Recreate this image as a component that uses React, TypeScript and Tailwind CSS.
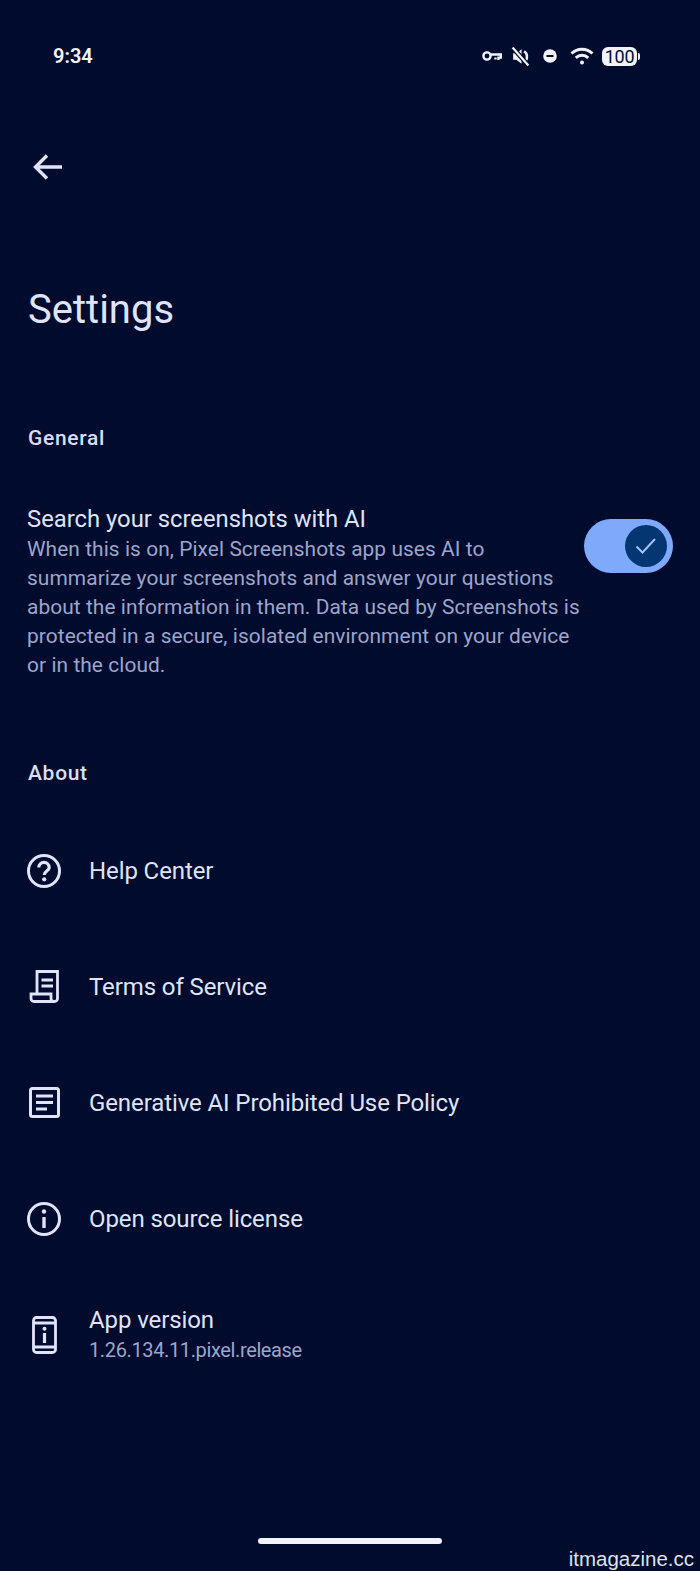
const font = { fontFamily: "Roboto, sans-serif" };

function StatusIcons() {
  return (
    <div className="flex items-center">
      <svg width="20" height="12" viewBox="0 0 20 12" className="mr-[9px]" fill="none" stroke="#f1f3fb" strokeWidth="2.4">
        <circle cx="5" cy="6" r="3.6" />
        <path d="M8.5 4.5H18.8V7.6H16.5V10M13.5 7.6V9.5" />
      </svg>
      <svg width="19" height="21" viewBox="0 0 18 20" className="mr-[13px]" fill="#f1f3fb">
        <path d="M2 7h3l5-4v14l-5-4H2z" />
        <path d="M12.5 5a6.5 6.5 0 0 1 1.5 9" fill="none" stroke="#f1f3fb" strokeWidth="2.4" />
        <path d="M1.5 1.5l15 17" stroke="#000b2e" strokeWidth="4.5" />
        <path d="M1.5 1.5l15 17" stroke="#f1f3fb" strokeWidth="2.2" />
      </svg>
      <svg width="14" height="14" viewBox="0 0 14 14" className="mr-[13px]">
        <circle cx="7" cy="7" r="6.8" fill="#f1f3fb" />
        <rect x="3.5" y="6" width="7" height="2" fill="#000b2e" />
      </svg>
      <svg width="24" height="18" viewBox="0 0 24 18" className="mr-[8px]" fill="none" stroke="#f1f3fb" strokeWidth="3">
        <path d="M1.5 6.5a15 15 0 0 1 21 0" />
        <path d="M5.8 10.8a9 9 0 0 1 12.4 0" />
        <circle cx="12" cy="15.5" r="2" fill="#f1f3fb" stroke="none" />
      </svg>
      <div className="flex items-center">
        <div className="w-[35px] h-[19px] rounded-[6px] bg-[#f1f3fb] text-[#000b2e] text-[18px] leading-[19px] text-center tracking-[-0.3px]" style={font}>
          100
        </div>
        <div className="ml-[1px] w-[2px] h-[7px] rounded-r-[2px] bg-[#f1f3fb]" />
      </div>
    </div>
  );
}

function HelpIcon() {
  return (
    <svg width="36" height="36" viewBox="0 0 36 36" fill="none" stroke="#dfe4fb" strokeWidth="3">
      <circle cx="17" cy="18" r="15.5" />
      <path d="M11.8 14.5a5.2 5.2 0 0 1 10.4 0c0 3.6-5 3.6-5 7.5" strokeWidth="3.2" />
      <circle cx="17.2" cy="26.3" r="2.1" fill="#dfe4fb" stroke="none" />
    </svg>
  );
}

function TermsIcon() {
  return (
    <svg width="36" height="36" viewBox="0 0 36 36" fill="none" stroke="#dfe4fb" strokeWidth="2.8">
      <path d="M10 25V2.5H30.5V29.5a3 3 0 0 1-3 3H7a3 3 0 0 1-3-3V25H24V29.5a3 3 0 0 0 3 3" />
      <path d="M14.5 11H26M14.5 17H26" />
    </svg>
  );
}

function PolicyIcon() {
  return (
    <svg width="36" height="36" viewBox="0 0 36 36" fill="none" stroke="#dfe4fb" strokeWidth="3">
      <rect x="3.5" y="3.5" width="28" height="28" rx="2" />
      <path d="M9 11H26M9 17.5H26M9 24H20" />
    </svg>
  );
}

function InfoIcon() {
  return (
    <svg width="36" height="36" viewBox="0 0 36 36" fill="none" stroke="#dfe4fb" strokeWidth="3">
      <circle cx="17" cy="18" r="15.5" />
      <path d="M17 16V27" strokeWidth="3.4" />
      <circle cx="17" cy="10.5" r="2.2" fill="#dfe4fb" stroke="none" />
    </svg>
  );
}

function VersionIcon() {
  return (
    <svg width="36" height="40" viewBox="0 0 36 40" fill="none" stroke="#dfe4fb" strokeWidth="2.8">
      <rect x="6.5" y="2.5" width="22" height="35" rx="3" />
      <path d="M6.5 8H28.5M6.5 32H28.5" />
      <path d="M17.5 18V28" strokeWidth="3.2" />
      <circle cx="17.5" cy="13.7" r="2" fill="#dfe4fb" stroke="none" />
    </svg>
  );
}

const links = [
  { label: "Help Center", icon: <HelpIcon /> },
  { label: "Terms of Service", icon: <TermsIcon /> },
  { label: "Generative AI Prohibited Use Policy", icon: <PolicyIcon /> },
  { label: "Open source license", icon: <InfoIcon /> },
];

export default function App() {
  return (
    <div className="relative w-[700px] h-[1571px] overflow-hidden bg-[#000b2e] text-[#dfe4fb]" style={font}>
      {/* status bar */}
      <div className="flex items-center justify-between h-[24px] mt-[44px] pl-[53px] pr-[60px]">
        <span className="text-[20px] font-semibold text-[#f5f6fc]">9:34</span>
        <StatusIcons />
      </div>

      <button type="button" className="block mt-[83px] ml-[32px]">
        <svg width="32" height="32" viewBox="0 0 32 32" fill="none" stroke="#dfe4fb" strokeWidth="3.4">
          <path d="M30 16H4M15 4.5L3.5 16L15 27.5" />
        </svg>
      </button>

      <h1 className="mt-[103px] ml-[28px] text-[40px] leading-[48px]">Settings</h1>

      <h2 className="mt-[90px] ml-[28px] text-[21px] leading-[28px] font-medium tracking-[0.7px] text-[#d8def5]">General</h2>

      <div className="flex mt-[52px] pl-[27px] pr-[27px]">
        <div className="w-[557px]">
          <div className="text-[23.8px] leading-[31px]">Search your screenshots with AI</div>
          <p className="text-[20.9px] leading-[29px] tracking-[0.07px] text-[#9ca5cb]">
            When this is on, Pixel Screenshots app uses AI to
            <br />
            summarize your screenshots and answer your questions
            <br />
            about the information in them. Data used by Screenshots is
            <br />
            protected in a secure, isolated environment on your device
            <br />
            or in the cloud.
          </p>
        </div>
        <div className="flex items-center justify-end w-[89px] h-[54px] mt-[15px] rounded-full bg-[#7fa9fb] pr-[6px]">
          <div className="flex items-center justify-center w-[42px] h-[42px] rounded-full bg-[#043672]">
            <svg width="22" height="18" viewBox="0 0 22 18" fill="none" stroke="#9ec2fb" strokeWidth="2">
              <path d="M1.5 9.5L7.5 15.5L20 2" />
            </svg>
          </div>
        </div>
      </div>

      <h2 className="mt-[79px] ml-[28px] text-[21px] leading-[28px] font-medium tracking-[0.7px] text-[#d8def5]">About</h2>

      <div className="mt-[26px] flex flex-col">
        {links.map((link) => (
          <div key={link.label} className="flex items-center h-[116px] pl-[27px]">
            <div className="w-[62px]">{link.icon}</div>
            <span className="text-[24px] tracking-[-0.1px]">{link.label}</span>
          </div>
        ))}
        <div className="flex items-center h-[116px] pl-[27px]">
          <div className="w-[62px]">
            <VersionIcon />
          </div>
          <div>
            <div className="text-[24px] leading-[31px] tracking-[-0.1px]">App version</div>
            <div className="text-[20px] leading-[29px] tracking-[-0.37px] text-[#9ca5cb]">1.26.134.11.pixel.release</div>
          </div>
        </div>
      </div>

      <div className="absolute left-[258px] top-[1538px] w-[184px] h-[6px] rounded-full bg-[#f1f3fb]" />
      <div
        className="absolute right-0 bottom-0 pr-[6px] text-[20.5px] leading-[24px] text-[#dfe3ea]"
        style={{ fontFamily: "'Liberation Sans', sans-serif" }}
      >
        itmagazine.cc
      </div>
    </div>
  );
}
